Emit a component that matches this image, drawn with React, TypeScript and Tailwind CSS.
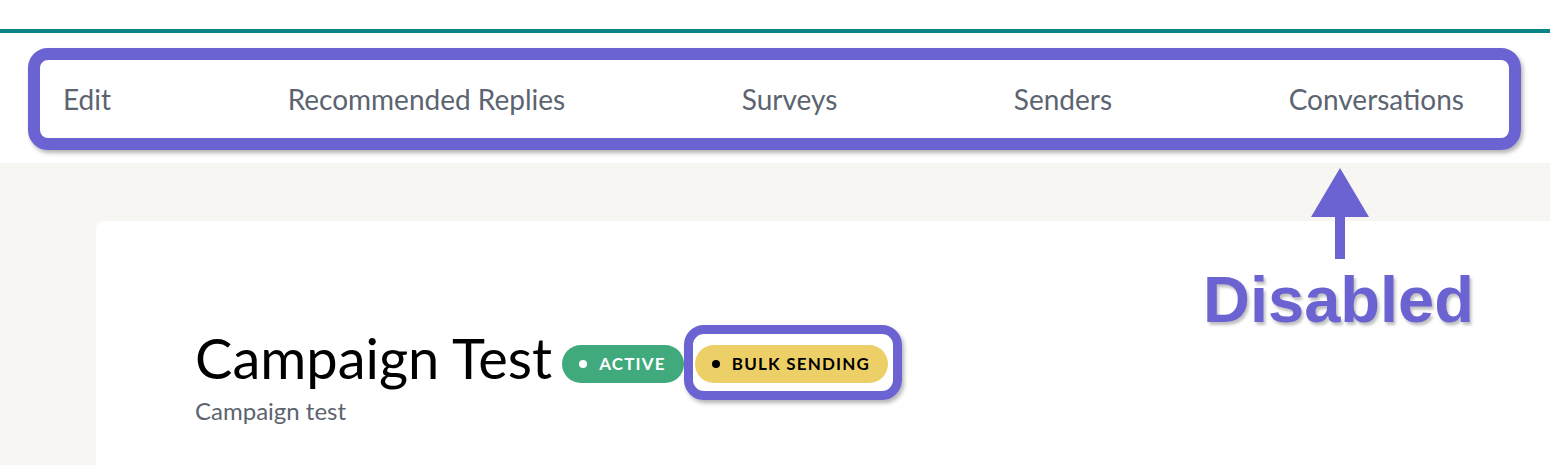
import React from 'react';

const tabs = ['Edit', 'Recommended Replies', 'Surveys', 'Senders', 'Conversations'];

const Badge = ({ label, tone }: { label: string; tone: 'green' | 'yellow' }) => (
  <span
    className={`flex h-[38px] items-center gap-[12px] rounded-full pl-[17px] pr-[18px] text-[17px] font-bold uppercase tracking-[0.07em] ${
      tone === 'green' ? 'bg-[#41aa7d] text-white' : 'bg-[#edcf68] text-black'
    }`}
  >
    <span className={`h-[8px] w-[8px] rounded-full ${tone === 'green' ? 'bg-white' : 'bg-black'}`} />
    {label}
  </span>
);

const App = () => {
  return (
    <div className="relative h-[465px] w-full overflow-hidden bg-white font-['Lato',sans-serif]">
      <div className="h-[29px]" />
      <div className="h-[4px] bg-[#0b8486]" />

      {/* tabs, with the purple callout round them */}
      <div className="pb-[13px] pl-[28px] pr-[29px] pt-[15px]">
        <nav className="flex h-[102px] items-center justify-between rounded-[20px] border-[12px] border-[#6c63d2] pl-[23px] pr-[45px] text-[28px] text-[#5b6470] shadow-[2px_3px_4px_rgba(0,0,0,0.3)]">
          {tabs.map((t) => (
            <span key={t}>{t}</span>
          ))}
        </nav>
      </div>

      <div className="h-full bg-[#f7f6f3] pl-[96px] pt-[58px]">
        <div className="h-full rounded-tl-[8px] bg-white pl-[99px] pt-[103px]">
          <div className="flex items-center">
            <h1 className="text-[56px] leading-[1.2] text-black">Campaign Test</h1>
            <div className="ml-[10px] mt-[12px] flex items-center gap-[11px]">
              <Badge label="Active" tone="green" />
              <span className="relative">
                <Badge label="Bulk Sending" tone="yellow" />
                <span className="absolute -bottom-[17px] -left-[11px] -right-[14px] -top-[20px] rounded-[20px] border-[9px] border-[#6c63d2] shadow-[2px_3px_4px_rgba(0,0,0,0.3)]" />
              </span>
            </div>
          </div>
          <p className="mt-[6px] text-[24px] leading-[1.2] text-[#5c6470]">Campaign test</p>
        </div>
      </div>

      {/* callout: arrow + label */}
      <svg className="absolute left-[1311px] top-[168px]" width="58" height="91" viewBox="0 0 58 91">
        <polygon points="29,0 58,49 0,49" fill="#6c63d2" />
        <rect x="24" y="48" width="10" height="43" fill="#6c63d2" />
      </svg>
      <div className="absolute left-[1203px] top-[267px] font-['Liberation_Sans',sans-serif] text-[65px] font-bold leading-none text-[#6c63d2] [text-shadow:2px_3px_3px_rgba(0,0,0,0.25)]">
        Disabled
      </div>
    </div>
  );
};

export default App;
